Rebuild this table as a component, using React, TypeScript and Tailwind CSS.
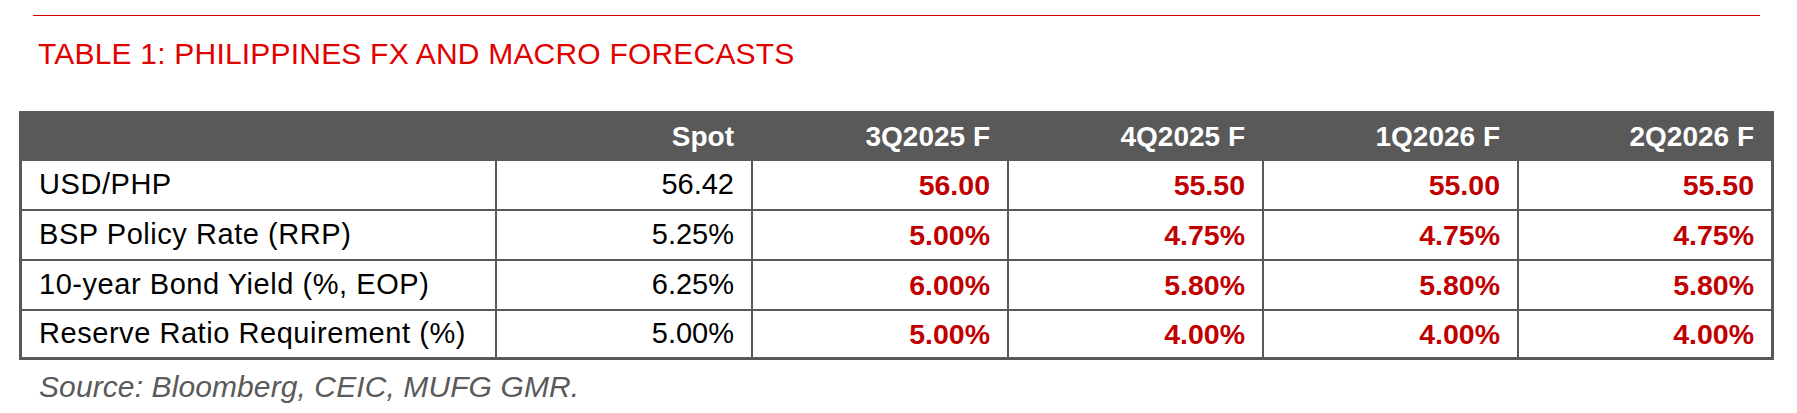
const rows = [
  { label: "USD/PHP", spot: "56.42", f: ["56.00", "55.50", "55.00", "55.50"], h: "h-[48px]" },
  { label: "BSP Policy Rate (RRP)", spot: "5.25%", f: ["5.00%", "4.75%", "4.75%", "4.75%"], h: "h-[48px]" },
  { label: "10-year Bond Yield (%, EOP)", spot: "6.25%", f: ["6.00%", "5.80%", "5.80%", "5.80%"], h: "h-[48px]" },
  { label: "Reserve Ratio Requirement (%)", spot: "5.00%", f: ["5.00%", "4.00%", "4.00%", "4.00%"], h: "h-[46px]" },
];

const heads = ["Spot", "3Q2025 F", "4Q2025 F", "1Q2026 F", "2Q2026 F"];

export default function App() {
  return (
    <div className="w-[1797px] h-[413px] bg-white font-['Liberation_Sans',Arial,sans-serif] text-black">
      <div className="pt-[15px] pl-[33px]">
        <div className="w-[1727px] h-px bg-[#d80000]" />
      </div>

      <h1 className="mt-[21px] pl-[38px] text-[30px] leading-[33px] tracking-[0.2px] text-[#e00000] font-normal">
        TABLE 1: PHILIPPINES FX AND MACRO FORECASTS
      </h1>

      <div className="mt-[41px] ml-[19px] w-[1755px] border-[3px] border-[#595959] bg-[#595959]">
        <div className="grid grid-cols-[473px_254px_254px_253px_253px_252px] gap-[2px]">
          {/* header */}
          <div className="h-[45px]" />
          {heads.map((h) => (
            <div
              key={h}
              className="h-[45px] flex items-center justify-end pr-[17px] text-[28px] font-bold text-white"
            >
              {h}
            </div>
          ))}

          {rows.map((r) => (
            <>
              <div key={r.label} className={`${r.h} bg-white flex items-center pl-[17px] text-[29px] tracking-[0.55px]`}>
                {r.label}
              </div>
              <div className={`${r.h} bg-white flex items-center justify-end pr-[17px] text-[29px]`}>
                {r.spot}
              </div>
              {r.f.map((v, i) => (
                <div
                  key={i}
                  className={`${r.h} bg-white flex items-center justify-end pr-[17px] text-[28.5px] font-bold text-[#c00000]`}
                >
                  {v}
                </div>
              ))}
            </>
          ))}
        </div>
      </div>

      <p className="mt-[10px] pl-[39px] text-[30px] leading-[34px] tracking-[0.1px] italic text-[#5a5a5a]">
        Source: Bloomberg, CEIC, MUFG GMR.
      </p>
    </div>
  );
}
